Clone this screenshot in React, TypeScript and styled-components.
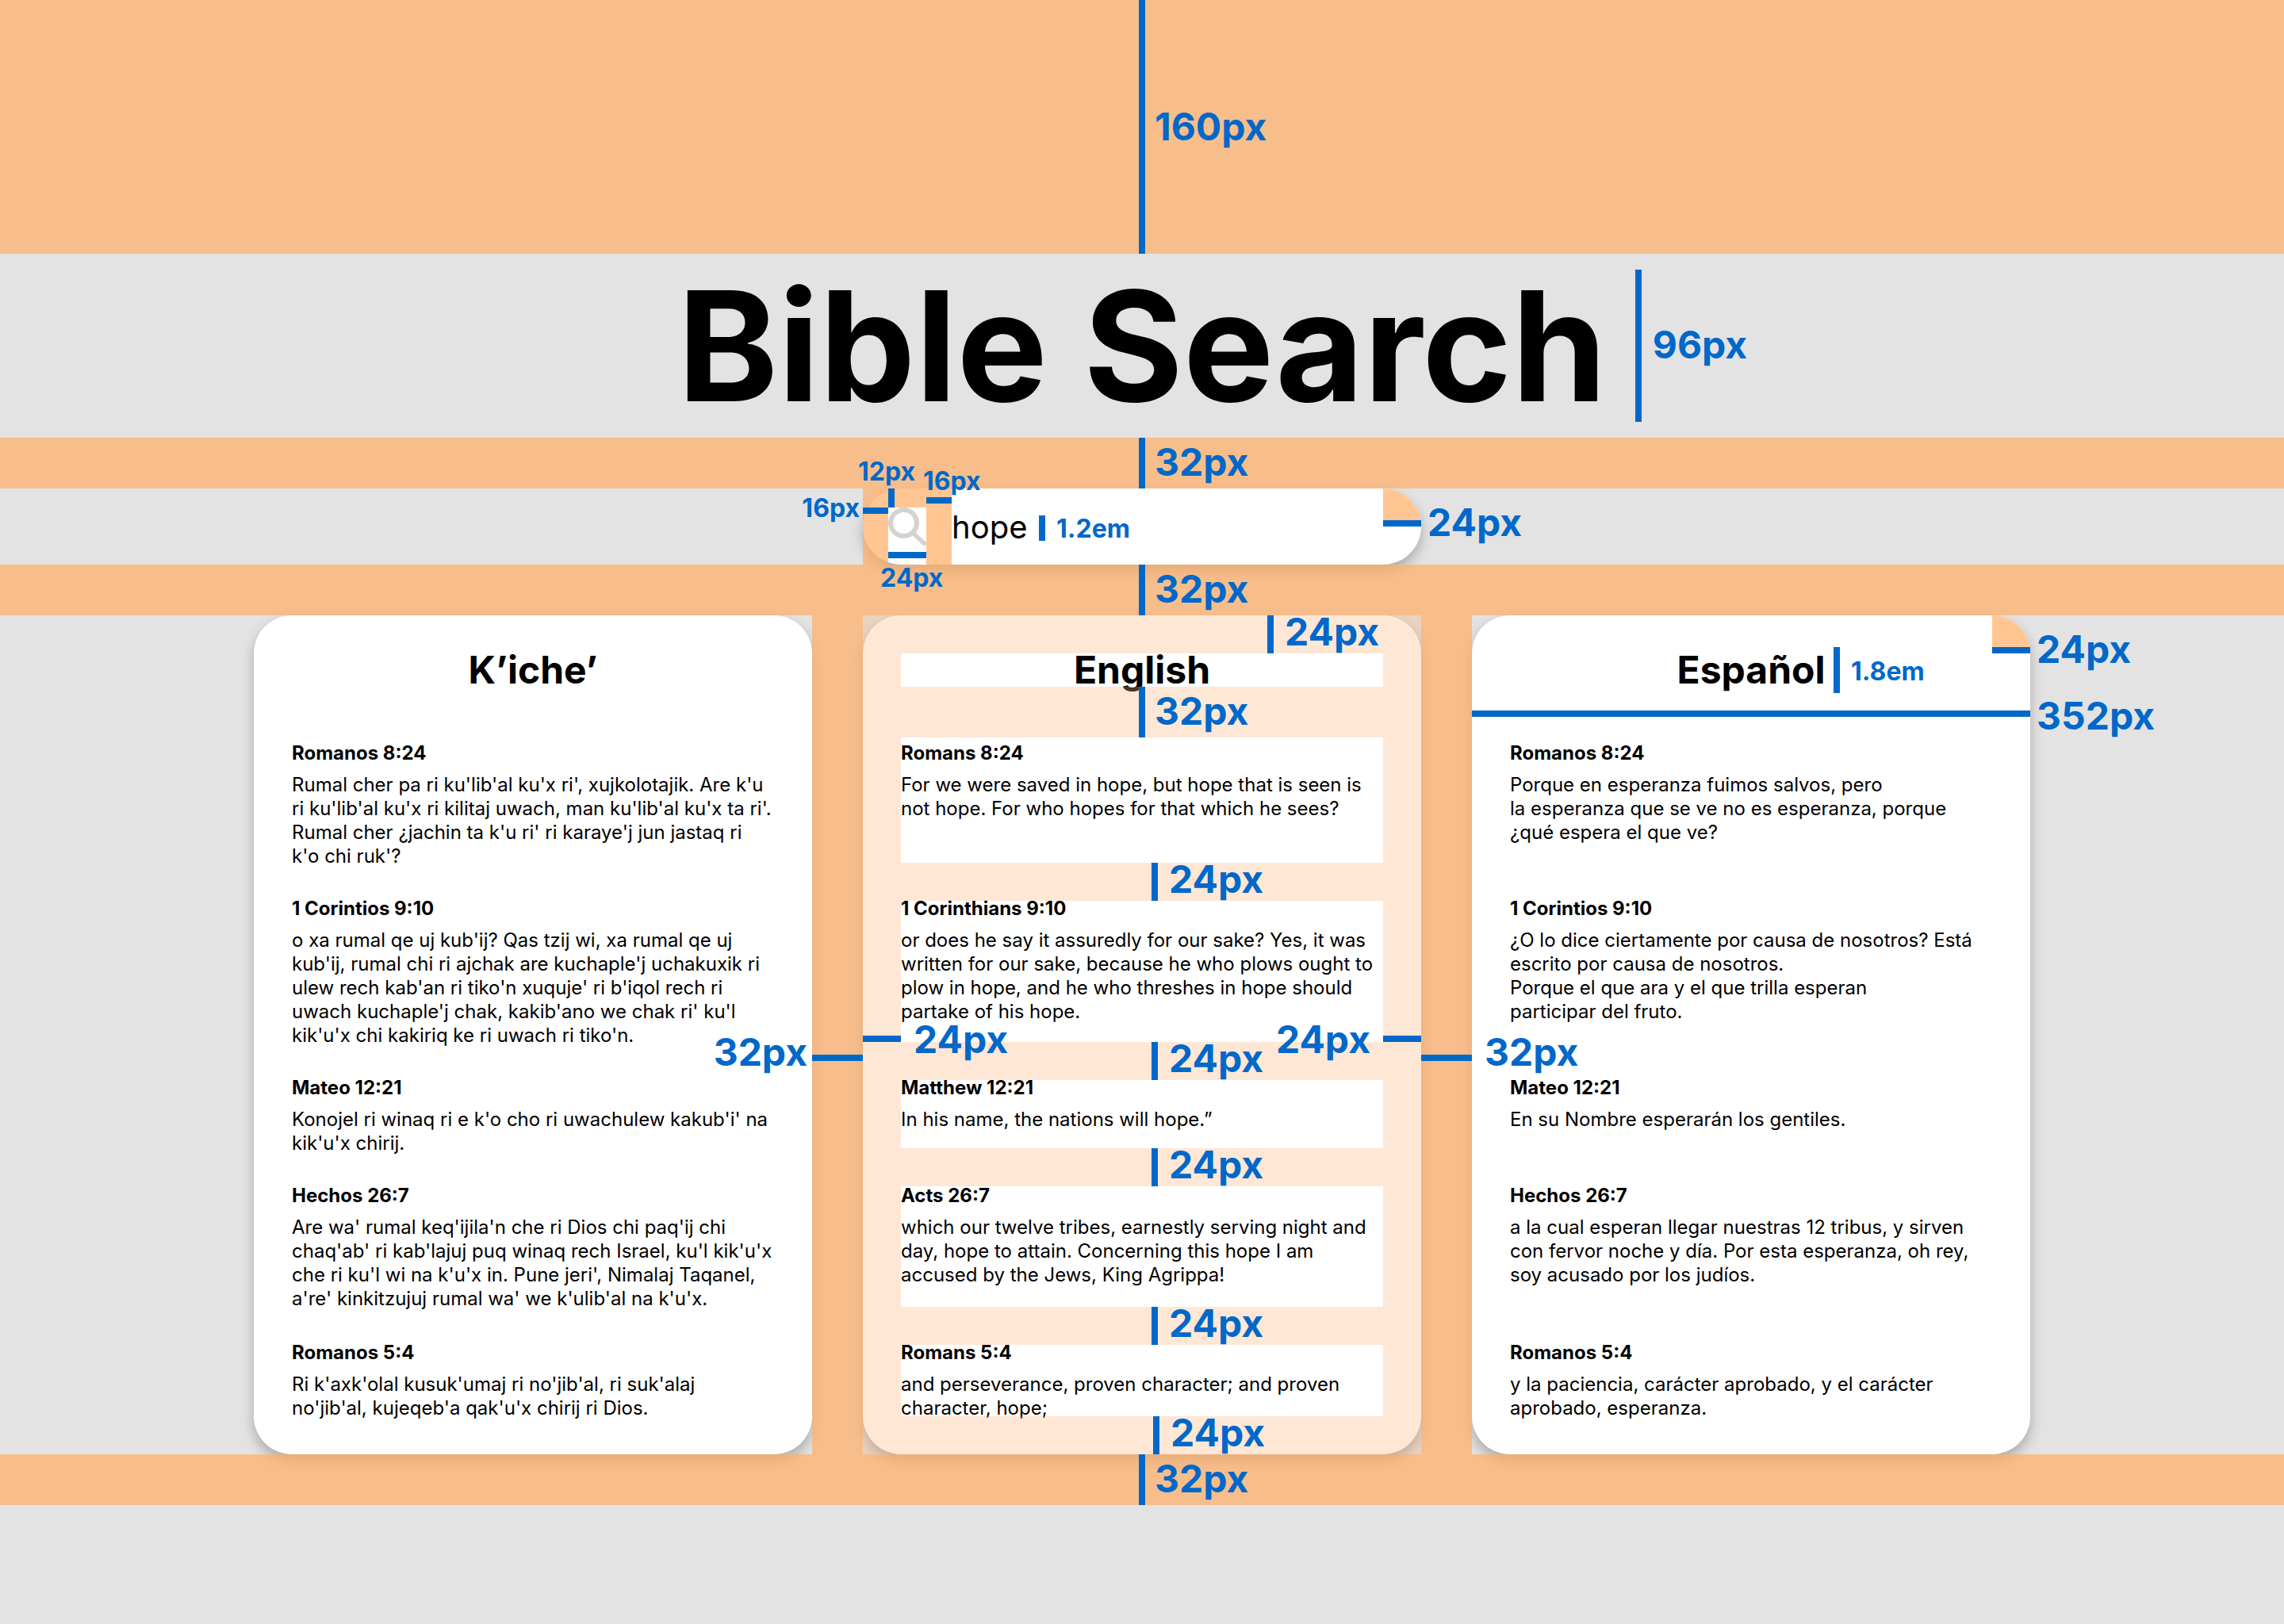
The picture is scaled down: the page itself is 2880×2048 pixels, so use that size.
import React, { useState } from "react";
import styled, { createGlobalStyle, css } from "styled-components";

const color = {
  page: "#e3e3e3",
  card: "#ffffff",
  ink: "#000000",
  measure: "#0068c9",
  icon: "#d3d3d3",
  margin: "rgba(255, 174, 101, 0.7)",
  padding: "rgba(255, 176, 120, 0.3)",
  corner: "#ffc693",
};

const shadow = "0 8px 16px rgba(0, 0, 0, 0.25)";

const GlobalStyle = createGlobalStyle`
  * { box-sizing: border-box; }
  body {
    margin: 0;
    background: ${color.page};
    color: ${color.ink};
    font-family: Inter, "Liberation Sans", sans-serif;
    font-size: 24px;
    line-height: 30px;
  }
  h1, h2, h3, p { margin: 0; }
`;

/* ---------- measurement marks ---------- */

const Label = styled.span<{ $small?: boolean }>`
  color: ${color.measure};
  font-size: ${(p) => (p.$small ? 32 : 48)}px;
  line-height: ${(p) => (p.$small ? 40 : 58)}px;
  font-weight: 700;
  white-space: nowrap;
`;

const Bar = styled.span`
  display: block;
  background: ${color.measure};
`;

const VBar = styled(Bar)`
  width: 8px;
  align-self: stretch;
`;

const HBar = styled(Bar)`
  width: 100%;
  height: 8px;
`;

type Spot = { $x?: number; $right?: number; $y: number };

const spot = css<Spot>`
  position: absolute;
  top: ${(p) => p.$y}px;
  ${(p) => (p.$right !== undefined ? `right: ${p.$right}px;` : `left: ${p.$x}px;`)}
`;

const Callout = styled(Label)<Spot>`
  ${spot}
  z-index: 4;
`;

const Mark = styled(Bar)<Spot & { $w: number; $h: number }>`
  ${spot}
  width: ${(p) => p.$w}px;
  height: ${(p) => p.$h}px;
  z-index: 3;
`;

/* ---------- page bands ---------- */

const Page = styled.div`
  display: flex;
  flex-direction: column;
  min-height: 100vh;
`;

const BandBox = styled.div<{ $height: number }>`
  position: relative;
  z-index: 2;
  display: grid;
  grid-template-columns: 1fr 8px 1fr;
  column-gap: 12px;
  height: ${(p) => p.$height}px;
  background: ${color.margin};

  ${Label} {
    grid-column: 3;
    align-self: center;
    padding-bottom: ${(p) => (p.$height > 64 ? 0 : 3)}px;
  }
  ${VBar} {
    grid-column: 2;
  }
`;

function Band({ height, children }: { height: number; children: string }) {
  return (
    <BandBox $height={height}>
      <VBar />
      <Label>{children}</Label>
    </BandBox>
  );
}

const TitleRow = styled.header`
  display: grid;
  grid-template-columns: 1fr auto 1fr;
  align-items: center;
`;

const Title = styled.h1`
  grid-column: 2;
  font-size: 192px;
  line-height: 232px;
  font-weight: 700;
  white-space: nowrap;
`;

const TitleMeasure = styled.div`
  display: flex;
  align-items: center;
  gap: 14px;
  height: 192px;
  padding-left: 36px;

  ${Label} {
    padding-bottom: 3px;
  }
`;

/* ---------- search ---------- */

const SearchRow = styled.form`
  display: flex;
  justify-content: center;
`;

const SearchBox = styled.div`
  position: relative;
  display: flex;
  width: 704px;
  height: 96px;
  border-radius: 48px;
  background: ${color.card};
  box-shadow: ${shadow};
`;

const SideInset = styled.div`
  width: 32px;
  background: ${color.margin};
`;

const IconCell = styled.label`
  display: flex;
  flex-direction: column;
  width: 48px;
`;

const TopInset = styled.div`
  height: 24px;
  background: ${color.margin};
`;

const SearchInput = styled.input`
  flex: 1;
  min-width: 0;
  height: 96px;
  margin: 0 48px 0 0;
  padding: 0;
  border: 0;
  outline: 0;
  background: transparent;
  color: ${color.ink};
  font-family: inherit;
  font-size: 40px;
`;

const Corner = styled.div`
  position: absolute;
  top: 0;
  right: 0;
  display: flex;
  align-items: flex-end;
  width: 48px;
  height: 48px;
  border-top-right-radius: 48px;
  background: ${color.corner};
`;

function SearchIcon() {
  return (
    <svg width="48" height="48" viewBox="0 0 48 48" fill="none" stroke={color.icon}>
      <circle cx="19.5" cy="19.5" r="16.5" strokeWidth="6" />
      <path d="M31 32 45.5 45.5" strokeWidth="5.5" strokeLinecap="round" />
    </svg>
  );
}

/* ---------- translation cards ---------- */

const Columns = styled.main`
  display: grid;
  grid-template-columns: 704px 64px 704px 64px 704px;
  justify-content: center;
`;

const Gutter = styled.div`
  position: relative;
  z-index: 2;
  background: ${color.margin};
  padding-top: 554px;
`;

const CardBox = styled.section`
  position: relative;
  padding: 48px;
  border-radius: 48px;
  background: ${color.card};
  box-shadow: ${shadow};
`;

const Language = styled.h2`
  margin-bottom: 64px;
  font-size: 48px;
  line-height: 42px;
  font-weight: 700;
  text-align: center;
`;

const rows = [158, 178, 86, 152, 90];

const Verses = styled.div`
  display: grid;
  grid-template-rows: ${rows.map((h) => `minmax(${h}px, auto)`).join(" ")};
  row-gap: 48px;
`;

const Verse = styled.article`
  &:first-child {
    padding-top: 10px;
  }
  &:nth-child(4) {
    padding-top: 2px;
  }
`;

const Reference = styled.h3`
  margin-bottom: 15px;
  font-size: 24px;
  line-height: 20px;
  font-weight: 700;
`;

const Passage = styled.p`
  margin-bottom: -10px;
  white-space: pre-line;
`;

/* Padding highlight that covers a card and leaves its content rows clear */

const Highlight = styled.div`
  position: absolute;
  inset: 0;
  display: grid;
  grid-template-columns: 48px 1fr 48px;
`;

const HighlightSide = styled.div`
  background: ${color.padding};
  padding-top: 530px;
`;

const HighlightStack = styled.div`
  display: flex;
  flex-direction: column;
`;

const ClearRow = styled.div<{ $height: number }>`
  flex: 1 0 ${(p) => p.$height}px;
`;

const TintRow = styled.div<{ $height: number; $start: number; $gap: number }>`
  display: flex;
  align-items: center;
  gap: ${(p) => p.$gap}px;
  height: ${(p) => p.$height}px;
  padding-left: ${(p) => p.$start}px;
  background: ${color.padding};

  ${Label} {
    margin: -8px 0;
    padding-bottom: ${(p) => (p.$height > 48 ? 3 : 6)}px;
  }
`;

function CardHighlight() {
  return (
    <Highlight>
      <HighlightSide>
        <HBar />
      </HighlightSide>
      <HighlightStack>
        <TintRow $height={48} $start={462} $gap={14}>
          <VBar />
          <Label>24px</Label>
        </TintRow>
        <ClearRow $height={42} />
        <TintRow $height={64} $start={300} $gap={12}>
          <VBar />
          <Label>32px</Label>
        </TintRow>
        {rows.map((height, i) => (
          <React.Fragment key={i}>
            <ClearRow $height={height} />
            <TintRow $height={48} $start={i === rows.length - 1 ? 318 : 316} $gap={14}>
              <VBar />
              <Label>24px</Label>
            </TintRow>
          </React.Fragment>
        ))}
      </HighlightStack>
      <HighlightSide>
        <HBar />
      </HighlightSide>
      <Callout $x={64} $y={506}>
        24px
      </Callout>
      <Callout $right={64} $y={506}>
        24px
      </Callout>
    </Highlight>
  );
}

type Entry = [reference: string, text: string];

const kiche: Entry[] = [
  [
    "Romanos 8:24",
    "Rumal cher pa ri ku'lib'al ku'x ri', xujkolotajik. Are k'u\nri ku'lib'al ku'x ri kilitaj uwach, man ku'lib'al ku'x ta ri'.\nRumal cher ¿jachin ta k'u ri' ri karaye'j jun jastaq ri\nk'o chi ruk'?",
  ],
  [
    "1 Corintios 9:10",
    "o xa rumal qe uj kub'ij? Qas tzij wi, xa rumal qe uj\nkub'ij, rumal chi ri ajchak are kuchaple'j uchakuxik ri\nulew rech kab'an ri tiko'n xuquje' ri b'iqol rech ri\nuwach kuchaple'j chak, kakib'ano we chak ri' ku'l\nkik'u'x chi kakiriq ke ri uwach ri tiko'n.",
  ],
  ["Mateo 12:21", "Konojel ri winaq ri e k'o cho ri uwachulew kakub'i' na\nkik'u'x chirij."],
  [
    "Hechos 26:7",
    "Are wa' rumal keq'ijila'n che ri Dios chi paq'ij chi\nchaq'ab' ri kab'lajuj puq winaq rech Israel, ku'l kik'u'x\nche ri ku'l wi na k'u'x in. Pune jeri', Nimalaj Taqanel,\na're' kinkitzujuj rumal wa' we k'ulib'al na k'u'x.",
  ],
  ["Romanos 5:4", "Ri k'axk'olal kusuk'umaj ri no'jib'al, ri suk'alaj\nno'jib'al, kujeqeb'a qak'u'x chirij ri Dios."],
];

const english: Entry[] = [
  ["Romans 8:24", "For we were saved in hope, but hope that is seen is\nnot hope. For who hopes for that which he sees?"],
  [
    "1 Corinthians 9:10",
    "or does he say it assuredly for our sake? Yes, it was\nwritten for our sake, because he who plows ought to\nplow in hope, and he who threshes in hope should\npartake of his hope.",
  ],
  ["Matthew 12:21", "In his name, the nations will hope.”"],
  [
    "Acts 26:7",
    "which our twelve tribes, earnestly serving night and\nday, hope to attain. Concerning this hope I am\naccused by the Jews, King Agrippa!",
  ],
  ["Romans 5:4", "and perseverance, proven character; and proven\ncharacter, hope;"],
];

const spanish: Entry[] = [
  [
    "Romanos 8:24",
    "Porque en esperanza fuimos salvos, pero\nla esperanza que se ve no es esperanza, porque\n¿qué espera el que ve?",
  ],
  [
    "1 Corintios 9:10",
    "¿O lo dice ciertamente por causa de nosotros? Está\nescrito por causa de nosotros.\nPorque el que ara y el que trilla esperan\nparticipar del fruto.",
  ],
  ["Mateo 12:21", "En su Nombre esperarán los gentiles."],
  [
    "Hechos 26:7",
    "a la cual esperan llegar nuestras 12 tribus, y sirven\ncon fervor noche y día. Por esta esperanza, oh rey,\nsoy acusado por los judíos.",
  ],
  ["Romanos 5:4", "y la paciencia, carácter aprobado, y el carácter\naprobado, esperanza."],
];

function Card({
  language,
  entries,
  lang,
  children,
}: {
  language: string;
  entries: Entry[];
  lang: string;
  children?: React.ReactNode;
}) {
  return (
    <CardBox lang={lang}>
      <Language>{language}</Language>
      <Verses>
        {entries.map(([reference, text]) => (
          <Verse key={reference}>
            <Reference>{reference}</Reference>
            <Passage>{text}</Passage>
          </Verse>
        ))}
      </Verses>
      {children}
    </CardBox>
  );
}

export default function App() {
  const [query, setQuery] = useState("hope");

  return (
    <>
      <GlobalStyle />
      <Page>
        <Band height={320}>160px</Band>
        <TitleRow>
          <Title>Bible Search</Title>
          <TitleMeasure>
            <VBar />
            <Label>96px</Label>
          </TitleMeasure>
        </TitleRow>
        <Band height={64}>32px</Band>

        <SearchRow role="search" onSubmit={(e) => e.preventDefault()}>
          <SearchBox>
            <SideInset />
            <IconCell htmlFor="query" aria-label="Search">
              <TopInset />
              <SearchIcon />
            </IconCell>
            <SideInset />
            <SearchInput id="query" value={query} onChange={(e) => setQuery(e.target.value)} />
            <Corner>
              <HBar />
            </Corner>

            <Mark $x={0} $y={24} $w={32} $h={8} />
            <Mark $x={32} $y={0} $w={8} $h={24} />
            <Mark $x={80} $y={11} $w={32} $h={8} />
            <Mark $x={32} $y={80} $w={48} $h={8} />
            <Mark $x={222} $y={34} $w={8} $h={32} />
            <Callout $small $right={708} $y={5}>
              16px
            </Callout>
            <Callout $small $x={-6} $y={-41}>
              12px
            </Callout>
            <Callout $small $x={76} $y={-29}>
              16px
            </Callout>
            <Callout $small $x={22} $y={93}>
              24px
            </Callout>
            <Callout $small $x={244} $y={31}>
              1.2em
            </Callout>
            <Callout $x={712} $y={14}>
              24px
            </Callout>
          </SearchBox>
        </SearchRow>
        <Band height={64}>32px</Band>

        <Columns>
          <Card language="K’iche’" entries={kiche} lang="quc" />
          <Gutter>
            <HBar />
            <Callout $right={70} $y={522}>
              32px
            </Callout>
          </Gutter>
          <Card language="English" entries={english} lang="en">
            <CardHighlight />
          </Card>
          <Gutter>
            <HBar />
            <Callout $x={80} $y={522}>
              32px
            </Callout>
          </Gutter>
          <Card language="Español" entries={spanish} lang="es">
            <Corner>
              <HBar />
            </Corner>
            <Mark $x={456} $y={40} $w={8} $h={58} />
            <Callout $small $x={478} $y={51}>
              1.8em
            </Callout>
            <Mark $x={0} $y={120} $w={704} $h={8} />
            <Callout $x={712} $y={14}>
              24px
            </Callout>
            <Callout $x={712} $y={98}>
              352px
            </Callout>
          </Card>
        </Columns>
        <Band height={64}>32px</Band>
      </Page>
    </>
  );
}
